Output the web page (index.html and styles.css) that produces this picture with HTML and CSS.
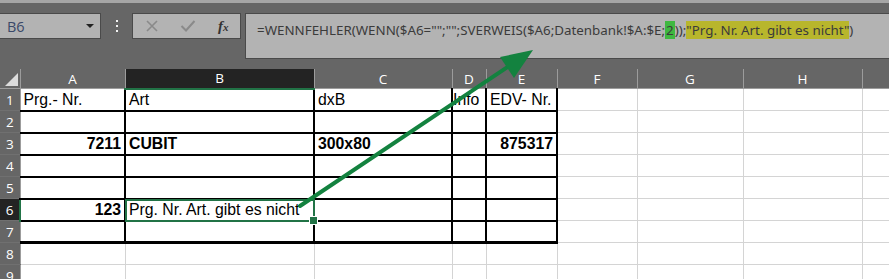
FILE: index.html
```html
<!DOCTYPE html>
<html lang="de">
<head>
    <meta charset="UTF-8">
    <title>Datenbank Abfrage</title>
    <link rel="stylesheet" href="styles.css">
</head>
<body>
    <div class="ribbon-edge"></div>
    <div class="formula-row">
        <div class="namebox">
            <span>B6</span>
            <span class="caret"></span>
        </div>
        <div class="grip"><i></i><i></i><i></i></div>
        <div class="fx-box">
            <svg class="ico" width="14" height="14" viewBox="0 0 14 14"><path d="M2 2 L12 12 M12 2 L2 12" stroke="#8a8a8a" stroke-width="1.6" fill="none"/></svg>
            <svg class="ico" width="16" height="14" viewBox="0 0 16 14"><path d="M1.5 7 L6 11.5 L14.5 2" stroke="#8a8a8a" stroke-width="2" fill="none"/></svg>
            <span class="fx">f<small>x</small></span>
        </div>
        <div class="formula">=WENNFEHLER(WENN($A6="";"";SVERWEIS($A6;Datenbank!$A:$E;<span class="hl-num">2</span>));<span class="hl-str">"Prg. Nr. Art. gibt es nicht"</span>)</div>
    </div>

    <table class="grid">
        <colgroup>
            <col style="width:20px"><col style="width:105px"><col style="width:189px"><col style="width:138px"><col style="width:34px"><col style="width:71px"><col style="width:80px"><col style="width:106px"><col style="width:119px"><col style="width:40px">
        </colgroup>
        <tr class="heads">
            <th class="corner"><svg width="20" height="19" viewBox="0 0 20 19"><path d="M18 4 L18 17 L5 17 Z" fill="#dcdcdc"/></svg></th>
            <th class="col">A</th><th class="col on">B</th><th class="col">C</th><th class="col">D</th><th class="col">E</th><th class="col">F</th><th class="col">G</th><th class="col">H</th><th class="col"></th>
        </tr>
        <tr>
            <th class="rh">1</th>
            <td class="b">Prg.- Nr.</td><td class="b">Art</td><td class="b">dxB</td><td class="b tight">Info</td><td class="b">EDV- Nr.</td><td></td><td></td><td></td><td></td>
        </tr>
        <tr>
            <th class="rh">2</th>
            <td class="b"></td><td class="b"></td><td class="b"></td><td class="b"></td><td class="b"></td><td></td><td></td><td></td><td></td>
        </tr>
        <tr class="strong">
            <th class="rh">3</th>
            <td class="b num">7211</td><td class="b">CUBIT</td><td class="b">300x80</td><td class="b"></td><td class="b num">875317</td><td></td><td></td><td></td><td></td>
        </tr>
        <tr>
            <th class="rh">4</th>
            <td class="b"></td><td class="b"></td><td class="b"></td><td class="b"></td><td class="b"></td><td></td><td></td><td></td><td></td>
        </tr>
        <tr>
            <th class="rh">5</th>
            <td class="b"></td><td class="b"></td><td class="b"></td><td class="b"></td><td class="b"></td><td></td><td></td><td></td><td></td>
        </tr>
        <tr>
            <th class="rh on">6</th>
            <td class="b num bold">123</td><td class="b sel">Prg. Nr. Art. gibt es nicht</td><td class="b"></td><td class="b"></td><td class="b"></td><td></td><td></td><td></td><td></td>
        </tr>
        <tr class="last">
            <th class="rh">7</th>
            <td class="b"></td><td class="b"></td><td class="b"></td><td class="b"></td><td class="b"></td><td></td><td></td><td></td><td></td>
        </tr>
        <tr>
            <th class="rh">8</th>
            <td></td><td></td><td></td><td></td><td></td><td></td><td></td><td></td><td></td>
        </tr>
        <tr>
            <th class="rh">9</th>
            <td></td><td></td><td></td><td></td><td></td><td></td><td></td><td></td><td></td>
        </tr>
    </table>

    <!-- annotation arrow drawn over the sheet -->
    <svg class="arrow" width="889" height="279" viewBox="0 0 889 279">
        <line x1="300" y1="206" x2="515" y2="62" stroke="#13823f" stroke-width="4" stroke-linecap="round"/>
        <polygon points="533,50 500,57 514,78" fill="#13823f"/>
    </svg>
</body>
</html>
```

FILE: styles.css
```css
* {
    box-sizing: border-box;
}
body {
    margin: 0;
    width: 889px;
    height: 279px;
    overflow: hidden;
    background: #666;
    font-family: 'Liberation Sans', Arial, sans-serif;
    position: relative;
}
.ribbon-edge {
    height: 3px;
    background: #a6a6a6;
}
.formula-row {
    display: flex;
    align-items: flex-start;
    margin-top: 10px;
    height: 46px;
}
.namebox {
    width: 101px;
    height: 26px;
    flex-shrink: 0;
    background: #b3b3b3;
    border: 1px solid #4a4a4a;
    border-left: none;
    display: flex;
    align-items: center;
    justify-content: space-between;
    padding: 0 6px 0 7px;
    font-family: 'Open Sans', sans-serif;
    font-size: 14.5px;
    color: #3a4869;
}
.namebox .caret {
    width: 0;
    height: 0;
    border-left: 4px solid transparent;
    border-right: 4px solid transparent;
    border-top: 4px solid #222;
}
.grip {
    width: 31px;
    height: 26px;
    flex-shrink: 0;
    display: flex;
    flex-direction: column;
    align-items: center;
    justify-content: center;
    gap: 3px;
}
.grip i {
    display: block;
    width: 2px;
    height: 2px;
    background: #f2f2f2;
}
.fx-box {
    width: 109px;
    height: 26px;
    flex-shrink: 0;
    background: #b3b3b3;
    border: 1px solid #4a4a4a;
    display: flex;
    align-items: center;
    padding-left: 12px;
    gap: 21px;
}
.fx-box .fx {
    font-family: 'Liberation Serif', serif;
    font-style: italic;
    font-weight: bold;
    font-size: 15px;
    color: #333;
    margin-left: 1px;
}
.fx-box .fx small {
    font-size: 11px;
}
.formula {
    margin-left: 4px;
    flex: 1;
    height: 46px;
    background: #b3b3b3;
    border: 1px solid #4a4a4a;
    border-right: none;
    padding: 4px 0 0 11px;
    font-family: 'Noto Sans', sans-serif;
    font-size: 13.35px;
    line-height: 24px;
    color: #3b3b3b;
    white-space: nowrap;
    overflow: hidden;
}
.hl-num {
    background: #3fb841;
    padding: 0 1px;
}
.hl-str {
    background: #b8b62c;
}
.grid {
    margin-top: 10px;
    border-collapse: collapse;
    table-layout: fixed;
    width: 902px;
}
.grid th {
    background: #666;
    color: #fff;
    font-family: 'Open Sans', sans-serif;
    font-weight: normal;
    font-size: 13.5px;
    padding: 0;
}
.grid .heads th {
    height: 19px;
    border-right: 1px solid #9c9c9c;
    border-bottom: 1px solid #9c9c9c;
}
.grid .heads th.on {
    background: #232323;
    border-bottom: 2px solid #217346;
}
.grid .corner svg {
    display: block;
}
.grid th.rh {
    height: 22px;
    border-right: 1px solid #9c9c9c;
    border-bottom: 1px solid #707070;
}
.grid th.rh.on {
    background: #232323;
    border-right: 2px solid #217346;
}
.grid td {
    height: 22px;
    background: #fff;
    border: 1px solid #d4d4d4;
    padding: 1px 3px 0;
    font-size: 15.8px;
    color: #000;
    white-space: nowrap;
}
.grid td.b {
    border-right: 2px solid #000;
    border-bottom: 2px solid #000;
}
.grid .last td.b {
    border-bottom: 3px solid #000;
}
.grid td.tight {
    padding: 1px 0 0;
}
.grid .num {
    text-align: right;
}
.grid .strong td,
.grid .bold {
    font-weight: bold;
}
.grid td.sel {
    position: relative;
}
.grid td.sel::after {
    content: '';
    position: absolute;
    inset: -1px -2px -2px -1px;
    border: 2px solid #217346;
}
.grid td.sel::before {
    content: '';
    position: absolute;
    right: -5px;
    bottom: -5px;
    width: 7px;
    height: 7px;
    background: #217346;
    border: 1px solid #fff;
    z-index: 1;
}
.arrow {
    position: absolute;
    left: 0;
    top: 0;
    pointer-events: none;
}
```
